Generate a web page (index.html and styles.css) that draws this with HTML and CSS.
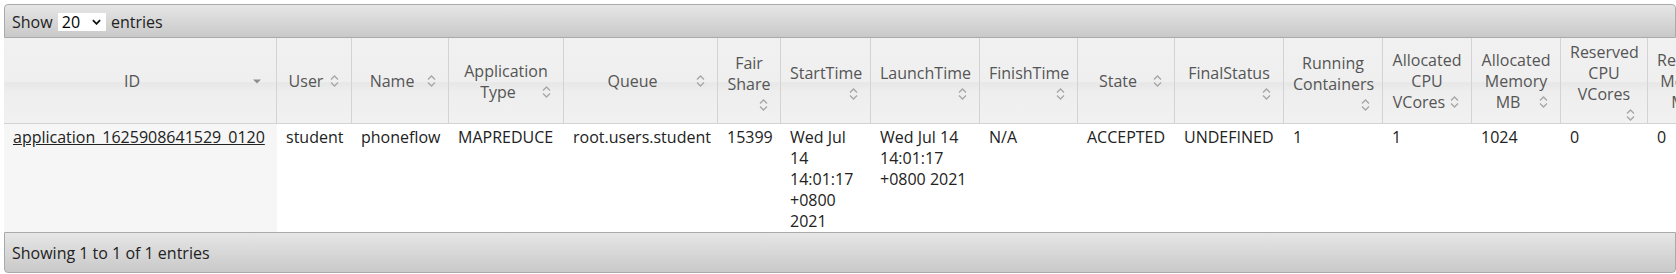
FILE: index.html
```html
<!DOCTYPE html>
<html lang="en">
<head>
<meta charset="utf-8">
<title>Applications</title>
<link rel="stylesheet" href="styles.css">
</head>
<body>
<div class="dt">
  <div class="bar bar-top">
    <label class="len">Show <span class="sel"><select><option>20</option><option>40</option><option>60</option></select><svg class="sel-arrow" viewBox="0 0 10 6"><path d="M1 1 5 5 9 1"/></svg></span> entries</label>
  </div>
  <table class="grid">
    <thead>
      <tr>
        <th class="w-id"><div class="ln"><svg class="si tri" viewBox="0 0 16 16"><polygon points="2,8.5 10,8.5 6,12.5"/></svg>ID</div></th>
        <th class="w-user"><div class="ln"><svg class="si" viewBox="0 0 16 16"><path d="M5 8.5 8.5 5 12 8.5M5 11.5 8.5 15 12 11.5"/></svg>User</div></th>
        <th class="w-name"><div class="ln"><svg class="si" viewBox="0 0 16 16"><path d="M5 8.5 8.5 5 12 8.5M5 11.5 8.5 15 12 11.5"/></svg>Name</div></th>
        <th class="w-type"><div class="ln">Application</div><div class="ln"><svg class="si" viewBox="0 0 16 16"><path d="M5 8.5 8.5 5 12 8.5M5 11.5 8.5 15 12 11.5"/></svg>Type</div></th>
        <th class="w-queue"><div class="ln"><svg class="si" viewBox="0 0 16 16"><path d="M5 8.5 8.5 5 12 8.5M5 11.5 8.5 15 12 11.5"/></svg>Queue</div></th>
        <th class="w-fair"><div class="ln">Fair</div><div class="ln">Share</div><svg class="si si-b" viewBox="0 0 16 16"><path d="M5 8.5 8.5 5 12 8.5M5 11.5 8.5 15 12 11.5"/></svg></th>
        <th class="w-start"><div class="ln">StartTime</div><svg class="si si-b" viewBox="0 0 16 16"><path d="M5 8.5 8.5 5 12 8.5M5 11.5 8.5 15 12 11.5"/></svg></th>
        <th class="w-launch"><div class="ln">LaunchTime</div><svg class="si si-b" viewBox="0 0 16 16"><path d="M5 8.5 8.5 5 12 8.5M5 11.5 8.5 15 12 11.5"/></svg></th>
        <th class="w-finish"><div class="ln">FinishTime</div><svg class="si si-b" viewBox="0 0 16 16"><path d="M5 8.5 8.5 5 12 8.5M5 11.5 8.5 15 12 11.5"/></svg></th>
        <th class="w-state"><div class="ln"><svg class="si" viewBox="0 0 16 16"><path d="M5 8.5 8.5 5 12 8.5M5 11.5 8.5 15 12 11.5"/></svg>State</div></th>
        <th class="w-final"><div class="ln">FinalStatus</div><svg class="si si-b" viewBox="0 0 16 16"><path d="M5 8.5 8.5 5 12 8.5M5 11.5 8.5 15 12 11.5"/></svg></th>
        <th class="w-run"><div class="ln">Running</div><div class="ln">Containers</div><svg class="si si-b" viewBox="0 0 16 16"><path d="M5 8.5 8.5 5 12 8.5M5 11.5 8.5 15 12 11.5"/></svg></th>
        <th class="w-acpu"><div class="ln">Allocated</div><div class="ln">CPU</div><div class="ln"><svg class="si" viewBox="0 0 16 16"><path d="M5 8.5 8.5 5 12 8.5M5 11.5 8.5 15 12 11.5"/></svg>VCores</div></th>
        <th class="w-amem"><div class="ln">Allocated</div><div class="ln">Memory</div><div class="ln"><svg class="si" viewBox="0 0 16 16"><path d="M5 8.5 8.5 5 12 8.5M5 11.5 8.5 15 12 11.5"/></svg>MB</div></th>
        <th class="w-rcpu"><div class="ln">Reserved</div><div class="ln">CPU</div><div class="ln">VCores</div><svg class="si si-b" viewBox="0 0 16 16"><path d="M5 8.5 8.5 5 12 8.5M5 11.5 8.5 15 12 11.5"/></svg></th>
        <th class="w-rmem"><div class="ln">Reserved</div><div class="ln">Memory</div><div class="ln"><svg class="si" viewBox="0 0 16 16"><path d="M5 8.5 8.5 5 12 8.5M5 11.5 8.5 15 12 11.5"/></svg>MB</div></th>
      </tr>
    </thead>
    <tbody>
      <tr>
        <td class="sorted"><a href="#">application_1625908641529_0120</a></td>
        <td>student</td>
        <td>phoneflow</td>
        <td>MAPREDUCE</td>
        <td>root.users.student</td>
        <td>15399</td>
        <td>Wed Jul<br>14<br>14:01:17<br>+0800<br>2021</td>
        <td>Wed Jul 14<br>14:01:17<br>+0800 2021</td>
        <td>N/A</td>
        <td>ACCEPTED</td>
        <td>UNDEFINED</td>
        <td>1</td>
        <td>1</td>
        <td>1024</td>
        <td>0</td>
        <td>0</td>
      </tr>
    </tbody>
  </table>
  <div class="bar bar-bottom">Showing 1 to 1 of 1 entries</div>
</div>
</body>
</html>
```

FILE: styles.css
```css
html, body {
  margin: 0;
  padding: 0;
  overflow: hidden;
  background: #fff;
}

body {
  font-family: "Open Sans", "Noto Sans", sans-serif;
  font-size: 16px;
  line-height: 21px;
  color: #222;
}

.dt {
  margin: 4px 0 0 4px;
  width: 1672px;
}

.bar {
  box-sizing: border-box;
  display: flex;
  align-items: center;
  padding: 0 7px;
  border: 1px solid #aaa;
  background: linear-gradient(#e6e6e6, #c9c9c9);
  color: #222;
}

.bar-top {
  height: 34px;
  padding-top: 2px;
  border-radius: 4px 4px 0 0;
}

.bar-bottom {
  height: 41px;
  padding-top: 1px;
  border-radius: 0 0 4px 4px;
}

.len {
  white-space: nowrap;
}

.sel {
  position: relative;
  display: inline-block;
  vertical-align: middle;
  margin: -3px 1px 0;
}

.sel select {
  -webkit-appearance: none;
  appearance: none;
  display: block;
  box-sizing: border-box;
  width: 48px;
  height: 18px;
  margin: 0;
  padding: 0 0 0 4px;
  border: 0;
  border-radius: 0;
  background: #fff;
  color: #000;
  font-family: "Open Sans", "Noto Sans", sans-serif;
  font-size: 16px;
  line-height: 18px;
}

.sel-arrow {
  position: absolute;
  left: 34px;
  top: 6px;
  width: 9px;
  height: 6px;
  pointer-events: none;
}

.sel-arrow path {
  fill: none;
  stroke: #111;
  stroke-width: 2;
}

.grid {
  table-layout: fixed;
  width: 1732px;
  border-collapse: separate;
  border-spacing: 0;
}

.grid th {
  box-sizing: border-box;
  padding: 4px 9px 2px;
  border-right: 1px solid #d3d3d3;
  border-bottom: 1px solid #d3d3d3;
  font-weight: normal;
  color: #555;
  text-align: center;
  vertical-align: middle;
  white-space: nowrap;
  background: linear-gradient(#f1f1f1 0%, #efefef 51%, #e7e7e7 53%, #eeeeee 63%, #f1f1f1 100%);
}

.ln {
  display: block;
}

.si {
  float: right;
  width: 16px;
  height: 16px;
}

.si path {
  fill: none;
  stroke: #a6a6a6;
  stroke-width: 1.3;
}

.tri polygon {
  fill: #8f8f8f;
}

.si-b {
  float: none;
  display: block;
  margin-left: auto;
}

.grid td {
  box-sizing: border-box;
  padding: 3px 9px 0;
  vertical-align: top;
  text-align: left;
  white-space: nowrap;
  color: #222;
}

.grid td.sorted {
  background: #f6f6f6;
}

.grid td a {
  color: #222;
  text-decoration: underline;
}

.w-id { width: 273px; }
.w-user { width: 75px; }
.w-name { width: 97px; }
.w-type { width: 115px; }
.w-queue { width: 154px; }
.w-fair { width: 63px; }
.w-start { width: 90px; }
.w-launch { width: 109px; }
.w-finish { width: 98px; }
.w-state { width: 97px; }
.w-final { width: 109px; }
.w-run { width: 99px; }
.w-acpu { width: 89px; }
.w-amem { width: 89px; }
.w-rcpu { width: 87px; }
.w-rmem { width: 88px; }
```
